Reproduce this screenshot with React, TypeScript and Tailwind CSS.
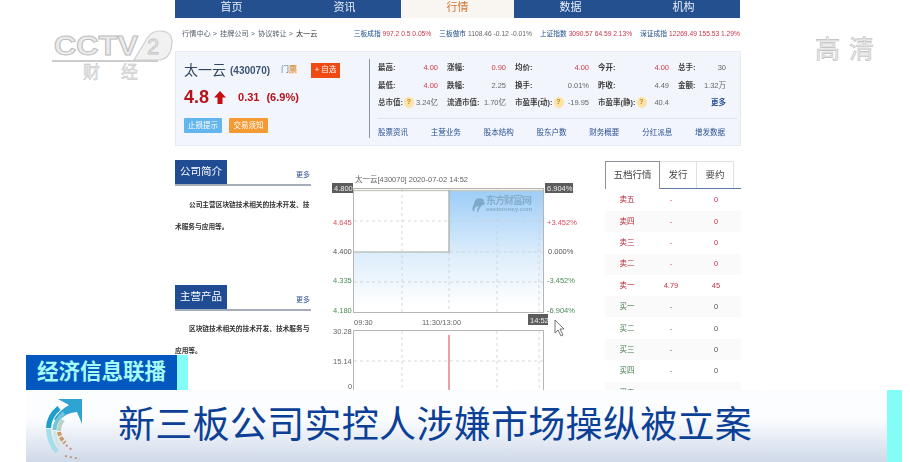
const tabs = ["首页", "资讯", "行情", "数据", "机构"];
const crumbs = ["行情中心", "挂牌公司", "协议转让"];
const indexes = [
  { name: "三板成指", value: "997.2 0.5 0.05%", up: true },
  { name: "三板做市", value: "1108.46 -0.12 -0.01%", up: false },
  { name: "上证指数", value: "3090.57 64.59 2.13%", up: true },
  { name: "深证成指", value: "12269.49 155.53 1.29%", up: true },
];
const stats = [
  ["最高:", "4.00", "red"], ["涨幅:", "0.90", "red"], ["均价:", "4.00", "red"], ["今开:", "4.00", "red"], ["总手:", "30", ""],
  ["最低:", "4.00", "red"], ["跌幅:", "2.25", ""], ["换手:", "0.01%", ""], ["昨收:", "4.49", ""], ["金额:", "1.32万", ""],
];
const links = ["股票资讯", "主营业务", "股本结构", "股东户数", "财务概要", "分红派息", "增发数据"];
const quotes = [
  ["卖五", "-", "0"], ["卖四", "-", "0"], ["卖三", "-", "0"], ["卖二", "-", "0"], ["卖一", "4.79", "45"],
  ["买一", "-", "0"], ["买二", "-", "0"], ["买三", "-", "0"], ["买四", "-", "0"], ["买五", "-", "0"],
];

function Help() {
  return (
    <span className="inline-flex h-[11px] w-[10px] items-center justify-center rounded-full bg-[#fbe3a6] text-[7px] text-[#b9862c]">?</span>
  );
}

function SectionHead({ title }: { title: string }) {
  return (
    <div className="flex items-end justify-between border-b-2 border-[#a6adba]">
      <div className="flex h-[24px] w-[52px] items-center justify-center bg-[#1f4c93] text-[10.5px] text-white">{title}</div>
      <span className="mb-[4px] mr-[1px] text-[7px] text-[#2a4f95]">更多</span>
    </div>
  );
}

function Cctv() {
  return (
    <div className="absolute left-[50px] top-[28px] w-[125px]">
      <svg width="124" height="36" viewBox="0 0 124 36" className="block">
        <path d="M84 32 L98 9 Q102 3 110 3 Q122 3 122 14 Q121 32 108 32 Z" fill="#f1f1f1" stroke="#cdcdcd" strokeWidth="1.2" />
        <path d="M2 33 H108" stroke="#cdcdcd" strokeWidth="2" />
        <text x="4" y="27" fontFamily="Liberation Sans" fontWeight="700" fontSize="27" textLength="84" lengthAdjust="spacingAndGlyphs" fill="#ececec" stroke="#bdbdbd" strokeWidth="1">CCTV</text>
        <text x="97" y="26" fontFamily="Liberation Sans" fontSize="22" fill="#e9e9e9" stroke="#c4c4c4" strokeWidth="0.8">2</text>
      </svg>
      <div className="ml-[33px] mt-[-1px] flex w-[55px] justify-between text-[17px] leading-[20px] text-[#e6e6e6] [-webkit-text-stroke:0.4px_#bdbdbd]">
        <span>财</span>
        <span>经</span>
      </div>
    </div>
  );
}

function Chart() {
  return (
    <svg width="270" height="245" viewBox="0 0 270 245" className="block">
      <defs>
        <linearGradient id="area" gradientUnits="userSpaceOnUse" x1="0" y1="44" x2="0" y2="160">
          <stop offset="0" stopColor="#9ccdf7" />
          <stop offset="0.55" stopColor="#dcedfb" />
          <stop offset="1" stopColor="#ffffff" />
        </linearGradient>
      </defs>
      <g fontFamily="Liberation Sans, Noto Sans CJK SC, sans-serif" fontSize="7.5">
        <text x="44" y="36" fill="#666">太一云[430070]  2020-07-02 14:52</text>
        <path d="M138 44 H232 V166 H43 V106 H138 Z" fill="url(#area)" />
        <rect x="42.5" y="42.5" width="190" height="124" fill="none" stroke="#b5b5b5" strokeWidth="1" />
        <path d="M43 44.5 H232" stroke="#c9c9c0" strokeWidth="1.5" />
        <path d="M43 106 H138 V44" fill="none" stroke="#a9a9a0" strokeWidth="1.2" />
        <path d="M43 75 H232 M43 106 H232 M43 136 H232 M91 43 V166 M186 43 V166 M138 106 V166 M228 43 V166" fill="none" stroke="#c9ced4" strokeWidth="0.8" strokeDasharray="3 3" />
        <path d="M172 53 Q164 50 163 58 Q160 63 163 66 Q163 60 168 60 Q165 64 167 67 Q168 60 174 58 Z" fill="#7fa9c9" />
        <text x="175" y="58" fontSize="10" fontWeight="700" fill="#86aecb" textLength="46">东方财富网</text>
        <text x="175" y="65" fontSize="6" fontWeight="700" fill="#86aecb" textLength="46">eastmoney.com</text>
        <rect x="21" y="37" width="21" height="10" fill="#5c5c5c" />
        <text x="23" y="45" fill="#eee">4.800</text>
        <text x="22" y="79" fill="#d9515f">4.645</text>
        <text x="22" y="108" fill="#555">4.400</text>
        <text x="22" y="137" fill="#4c8c56">4.335</text>
        <text x="22" y="167" fill="#4c8c56">4.180</text>
        <rect x="234" y="37" width="28" height="10" fill="#5c5c5c" />
        <text x="236" y="45" fill="#eee">6.904%</text>
        <text x="236" y="79" fill="#d9515f">+3.452%</text>
        <text x="237" y="108" fill="#555">0.000%</text>
        <text x="236" y="137" fill="#4c8c56">-3.452%</text>
        <text x="236" y="167" fill="#4c8c56">-6.904%</text>
        <text x="43" y="179" fill="#666">09:30</text>
        <text x="111" y="179" fill="#666">11:30/13:00</text>
        <rect x="217" y="168" width="20" height="11" fill="#5c5c5c" />
        <text x="219" y="176.5" fill="#eee">14:52</text>
        <path d="M244 174 V187 L247 184 L250 190 L252 189 L249 183 L253 183 Z" fill="#fff" stroke="#555" strokeWidth="0.8" />
        <path d="M42.5 245 V184.5 H232.5 V245" fill="none" stroke="#b5b5b5" strokeWidth="1" />
        <path d="M43 215 H232 M91 185 V245 M186 185 V245 M228 185 V245" fill="none" stroke="#c9ced4" strokeWidth="0.8" strokeDasharray="3 3" />
        <path d="M138 189 V245" stroke="#d9404a" strokeWidth="1" />
        <text x="22" y="188" fill="#666">30.28</text>
        <text x="22" y="218" fill="#666">15.14</text>
        <text x="37" y="243" fill="#666">0</text>
      </g>
    </svg>
  );
}

function ArrowLogo() {
  return (
    <svg width="40" height="64" viewBox="0 0 40 64" className="mt-[8px] shrink-0 self-start">
      <path d="M12 1 H36 V26 L31 14 Q20 14 12 24 L8 21 Q14 12 23 7 Z" fill="#2fa3d2" />
      <path d="M13 10 Q3 18 2.5 30" fill="none" stroke="#1f9ecb" strokeWidth="5" />
      <path d="M2.5 31 Q3 44 11 54" fill="none" stroke="#a5deea" strokeWidth="5" />
      <path d="M18 15 Q9 22 8.5 32" fill="none" stroke="#6fc6da" strokeWidth="4" />
      <path d="M8.5 33 Q9 42 14 48" fill="none" stroke="#cfe6e4" strokeWidth="3.5" />
      <path d="M17 22 Q13 27 13 33" fill="none" stroke="#bcd2c8" strokeWidth="4" />
      <path d="M13 34 Q14 40 19 45" fill="none" stroke="#c99a68" strokeWidth="4" strokeDasharray="4 1.5" />
      <path d="M20 47 L27 53" fill="none" stroke="#c88a72" strokeWidth="2" strokeDasharray="2 3" />
      <path d="M19 58 L34 61" fill="none" stroke="#b89c88" strokeWidth="2" strokeDasharray="2 3" />
    </svg>
  );
}

export default function App() {
  return (
    <div className="relative h-[462px] w-[910px] overflow-hidden bg-white font-['Liberation_Sans','Noto_Sans_CJK_SC',sans-serif]">
      <div className="ml-[175px] w-[566px] blur-[0.3px]">
        <nav className="flex h-[18px]">
          {tabs.map((t) => (
            <div
              key={t}
              className={
                t === "行情"
                  ? "flex w-[113px] items-center justify-center bg-[#f9f6f1] pb-[4px] text-[11px] text-[#d9742f]"
                  : "flex w-[113px] items-center justify-center bg-[#24508f] pb-[4px] text-[11px] text-[#e8eef7]"
              }
            >
              {t}
            </div>
          ))}
        </nav>

        <div className="flex h-[33px] items-center justify-between whitespace-nowrap pl-[7px] pr-[1px]">
          <div className="flex items-center gap-[3px] text-[7.2px] text-[#56606e]">
            {crumbs.map((c) => (
              <span key={c}>{c}&nbsp;&gt;</span>
            ))}
            <span className="text-[#333]">太一云</span>
          </div>
          <div className="flex gap-[8px] text-[6.7px]">
            {indexes.map((i) => (
              <span key={i.name} className="flex gap-[2px]">
                <span className="text-[#1e4a8c]">{i.name}</span>
                <span className={i.up ? "text-[#c8344a]" : "text-[#666]"}>{i.value}</span>
              </span>
            ))}
          </div>
        </div>

        <section className="flex h-[95px] border border-[#e4ebf4] bg-[#f2f6fc]">
          <div className="w-[193px] pl-[8px] pt-[6px]">
            <div className="flex h-[24px] items-center">
              <span className="text-[14px] text-[#33465f]">太一云</span>
              <span className="ml-[4px] text-[10px] font-bold text-[#3c5478]">(430070)</span>
              <span className="ml-[11px] text-[8px] text-[#4a6a9c]">门<span className="bg-[#fbe3c4] text-[#c77b2e]">票</span></span>
              <span className="ml-[14px] flex h-[15px] w-[29px] items-center justify-center bg-[#ee4a12] text-[7.5px] text-white">+ 自选</span>
            </div>
            <div className="mt-[3px] flex h-[24px] items-center text-[#b5121b]">
              <span className="text-[18px] font-bold">4.8</span>
              <svg width="12" height="13" viewBox="0 0 12 13" className="ml-[5px]">
                <path d="M6 0 L12 6.5 H8.5 V13 H3.5 V6.5 H0 Z" fill="#c40f16" />
              </svg>
              <span className="ml-[12px] text-[11px] font-bold">0.31</span>
              <span className="ml-[7px] text-[11px] font-bold">(6.9%)</span>
            </div>
            <div className="mt-[9px] flex gap-[7px] text-[7.5px] text-white">
              <span className="flex h-[15px] w-[38px] items-center justify-center rounded-[1px] bg-[#62b5ef]">止损提示</span>
              <span className="flex h-[15px] w-[39px] items-center justify-center rounded-[1px] bg-[#f39a34]">交易须知</span>
            </div>
          </div>

          <div className="my-[7px] w-px bg-[#8c95a3]" />

          <div className="flex-1 pl-[8px] pr-[3px] pt-[7px] text-[7.5px] text-[#444]">
            <div className="grid grid-cols-[69px_68px_83px_80px_48px] grid-rows-[18px_17px_17px] items-center">
              {stats.map(([label, value, tone]) => (
                <div key={label} className="flex justify-between pr-[9px] [&:nth-child(5n)]:pr-0">
                  <span className="font-bold text-[#3a3a3a]">{label}</span>
                  <span className={tone === "red" ? "text-[#cf3a48]" : "text-[#666]"}>{value}</span>
                </div>
              ))}
              <div className="flex items-center justify-between pr-[9px]">
                <span className="flex items-center gap-[1px] font-bold">总市值:<Help /></span>
                <span className="text-[#666]">3.24亿</span>
              </div>
              <div className="flex items-center justify-between pr-[9px]">
                <span className="font-bold">流通市值:</span>
                <span className="text-[#666]">1.70亿</span>
              </div>
              <div className="flex items-center justify-between pr-[9px]">
                <span className="flex items-center gap-[1px] whitespace-nowrap font-bold">市盈率(动):<Help /></span>
                <span className="text-[#666]">-19.95</span>
              </div>
              <div className="flex items-center justify-between pr-[9px]">
                <span className="flex items-center gap-[1px] whitespace-nowrap font-bold">市盈率(静):<Help /></span>
                <span className="text-[#666]">40.4</span>
              </div>
              <div className="text-right font-bold text-[#2a4f95]">更多</div>
            </div>
            <div className="mt-[7px] flex justify-between border-t border-[#dfe4ec] pr-[12px] pt-[8px] text-[#2a4f95]">
              {links.map((l) => (
                <span key={l}>{l}</span>
              ))}
            </div>
          </div>
        </section>

        <div className="flex">
          <aside className="w-[136px] pt-[14px]">
            <SectionHead title="公司简介" />
            <p className="mt-[8px] h-[91px] text-[6.7px] font-bold leading-[21.5px] text-[#333] [text-indent:14px]">
              公司主营区块链技术相关的技术开发、技术服务与应用等。
            </p>
            <SectionHead title="主营产品" />
            <p className="mt-[7px] text-[6.7px] font-bold leading-[21.5px] text-[#333] [text-indent:14px]">
              区块链技术相关的技术开发、技术服务与应用等。
            </p>
          </aside>
          <div className="w-[270px]">
            <Chart />
          </div>
          <div className="ml-[24px] w-[136px] pt-[15px]">
            <div className="flex h-[28px] border-b border-[#5e7aa3] text-[9.5px] text-[#444]">
              <div className="mb-[-1px] flex w-[55px] items-center justify-center border-x border-t border-[#8d9198] bg-white">五档行情</div>
              <div className="flex w-[37px] items-center justify-center border-r border-t border-[#dde0e4]">发行</div>
              <div className="flex w-[37px] items-center justify-center border-r border-t border-[#dde0e4]">要约</div>
            </div>
            {quotes.map(([label, price, vol], i) => (
              <div
                key={label}
                className={`mt-[0.4px] grid h-[21px] grid-cols-[44px_44px_46px] items-center text-center text-[7.5px] ${i % 2 === 1 ? "bg-[#fafafa]" : ""} ${i < 5 ? "text-[#c8344a]" : "text-[#556]"}`}
              >
                <span className={i < 5 ? "text-[#b92234]" : "text-[#3f7a4a]"}>{label}</span>
                <span>{price}</span>
                <span>{vol}</span>
              </div>
            ))}
          </div>
        </div>
      </div>

      <Cctv />
      <div className="absolute left-[815px] top-[35px] flex gap-[9px] text-[25px] leading-[28px] text-[#ececec] [-webkit-text-stroke:0.6px_#bdbdbd]">
        <span>高</span>
        <span>清</span>
      </div>

      <div className="absolute left-[26px] top-[355px] flex h-[35px]">
        <div className="flex w-[151px] items-center justify-center bg-[#0457bf] text-[21.5px] font-bold text-[#a5fbf6]">经济信息联播</div>
        <div className="w-[11px] bg-[#84fdf7]" />
      </div>
      <div className="absolute left-[26px] top-[390px] flex h-[72px] w-[876px]">
        <div className="flex flex-1 items-center bg-gradient-to-b from-[#fbfdff] from-40% to-[#cfd9e8] pl-[20px]">
          <ArrowLogo />
          <span className="ml-[32px] whitespace-nowrap text-[37px] tracking-[0.3px] text-[#0c4096]">新三板公司实控人涉嫌市场操纵被立案</span>
        </div>
        <div className="w-[15px] bg-[#84fdf7]" />
      </div>
    </div>
  );
}
